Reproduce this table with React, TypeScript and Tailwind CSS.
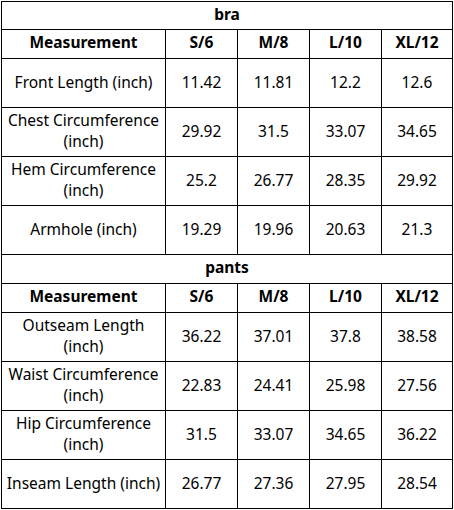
import { Fragment } from 'react'

const sections = [
  {
    title: 'bra',
    rows: [
      { name: 'Front Length (inch)', values: ['11.42', '11.81', '12.2', '12.6'] },
      { name: 'Chest Circumference (inch)', values: ['29.92', '31.5', '33.07', '34.65'] },
      { name: 'Hem Circumference (inch)', values: ['25.2', '26.77', '28.35', '29.92'] },
      { name: 'Armhole (inch)', values: ['19.29', '19.96', '20.63', '21.3'] },
    ],
  },
  {
    title: 'pants',
    rows: [
      { name: 'Outseam Length (inch)', values: ['36.22', '37.01', '37.8', '38.58'] },
      { name: 'Waist Circumference (inch)', values: ['22.83', '24.41', '25.98', '27.56'] },
      { name: 'Hip Circumference (inch)', values: ['31.5', '33.07', '34.65', '36.22'] },
      { name: 'Inseam Length (inch)', values: ['26.77', '27.36', '27.95', '28.54'] },
    ],
  },
]

const sizes = ['S/6', 'M/8', 'L/10', 'XL/12']

const App = () => {
  return (
    <div className="w-[454px] h-[510px] bg-white pt-px pl-px">
      <div
        className="w-[452px] grid grid-cols-[163px_71px_71px_71px_70px] gap-px bg-black p-px text-black text-[15.5px] leading-[21px]"
        style={{ fontFamily: '"Noto Sans", "Open Sans", sans-serif' }}
      >
        {sections.map((section, si) => (
          <Fragment key={section.title}>
            {/* section title */}
            <div
              className={`col-span-5 bg-white flex items-center justify-center font-bold pb-[3px] ${si === 0 ? 'h-[27px]' : 'h-[28px]'}`}
            >
              {section.title}
            </div>

            {/* header */}
            <div className="h-[28px] bg-white flex items-center justify-center font-bold pb-[3px]">Measurement</div>
            {sizes.map((s) => (
              <div key={s} className="h-[28px] bg-white flex items-center justify-center font-bold pb-[3px]">
                {s}
              </div>
            ))}

            {/* rows */}
            {section.rows.map((row) => (
              <Fragment key={row.name}>
                <div className="h-[48px] bg-white flex items-center justify-center text-center px-1 pb-[2px]">
                  {row.name}
                </div>
                {row.values.map((v, i) => (
                  <div key={i} className="h-[48px] bg-white flex items-center justify-center pb-[2px]">
                    {v}
                  </div>
                ))}
              </Fragment>
            ))}
          </Fragment>
        ))}
      </div>
    </div>
  )
}

export default App
